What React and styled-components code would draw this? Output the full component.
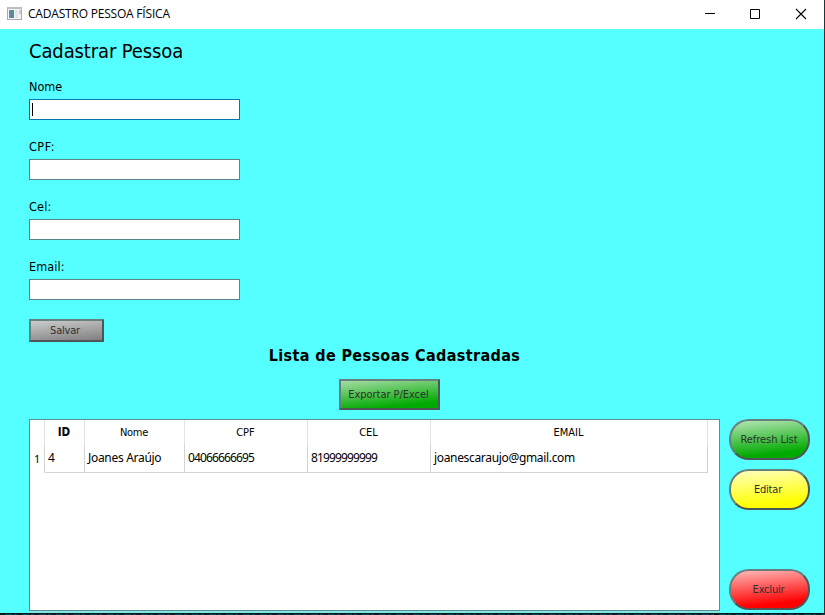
import React from "react";
import styled, { createGlobalStyle, css } from "styled-components";

const GlobalStyle = createGlobalStyle`
  * { box-sizing: border-box; }
  body { margin: 0; overflow: hidden; }
`;

const ui = css`
  font-family: "DejaVu Sans Condensed", "DejaVu Sans", sans-serif;
  font-stretch: condensed;
`;

const Window = styled.div`
  width: 825px;
  height: 615px;
  display: flex;
  flex-direction: column;
  background: #55ffff;
  border-right: 1px solid #17393d;
  color: #000;
  ${ui}
`;

const TitleBar = styled.header`
  height: 29px;
  flex: none;
  display: flex;
  align-items: center;
  background: #fff;
  padding: 0 17px 2px 7px;
`;

const Title = styled.h1`
  margin: 0 auto 0 6px;
  font: 400 12px/16px "Open Sans", "Noto Sans", sans-serif;
  letter-spacing: ${(p) => p.$spacing}px;
  white-space: nowrap;
`;

const Controls = styled.div`
  display: flex;
  gap: 34px;
`;

const Content = styled.main`
  height: 584px;
  flex: none;
  padding: 10px 14px 0 29px;
`;

const Heading = styled.h2`
  margin: 0;
  height: 25px;
  font-size: 20px;
  line-height: 24px;
  font-weight: 400;
  letter-spacing: ${(p) => p.$spacing}px;
`;

const Form = styled.form`
  display: flex;
  flex-direction: column;
  align-items: flex-start;
  padding-top: 15px;
`;

const Field = styled.label`
  height: 60px;
  display: flex;
  flex-direction: column;
`;

const Caption = styled.span`
  height: 20px;
  font-size: 12.5px;
  line-height: 16px;
  letter-spacing: ${(p) => p.$spacing}px;
`;

const Input = styled.span`
  width: 211px;
  height: 21px;
  padding: 3px 2px;
  background: #fff;
  border: 1px solid ${(p) => (p.$focused ? "#0078a8" : "#5b8585")};
`;

const Caret = styled.i`
  display: block;
  width: 1px;
  height: 13px;
  background: #000;
`;

const Button = styled.button`
  ${ui}
  width: ${(p) => p.$w}px;
  height: ${(p) => p.$h}px;
  padding: 1px 0 0;
  font-size: 11px;
  line-height: 14px;
  letter-spacing: ${(p) => p.$spacing}px;
  text-indent: ${(p) => p.$shift || 0}px;
  color: #302f2f;
  white-space: nowrap;
  border: 2px solid;
  border-color: #66807f #505657 #505657 #66807f;
  border-radius: ${(p) => p.$radius || 0}px;
  background: linear-gradient(174deg, ${(p) => p.$from} 0%, ${(p) => p.$to} ${(p) => p.$stop || 80}%);
  background-origin: border-box;
`;

const ListHeader = styled.section`
  width: 731px;
  height: 77px;
  display: flex;
  flex-direction: column;
  align-items: center;
`;

const ListTitle = styled.h3`
  margin: 0;
  height: 37px;
  font-size: 16px;
  line-height: 27px;
  font-weight: 700;
  letter-spacing: ${(p) => p.$spacing}px;
  white-space: nowrap;
`;

const ExportSlot = styled.div`
  padding-right: 10px;
`;

const ListArea = styled.section`
  display: flex;
  gap: 9px;
`;

const TableFrame = styled.div`
  width: 691px;
  height: 192px;
  background: #fff;
  border: 1px solid #5b8f8f;
  box-shadow: 0 2px 0 #83e5e3;
`;

const Grid = styled.div`
  display: grid;
  grid-template-columns: 15px 40px 100px 123px 123px 277px;
  grid-template-rows: 25px 28px;
  width: 678px;
`;

const HeadCell = styled.div`
  border-right: 1px solid #e3e3e3;
  padding-right: 1px;
  text-align: center;
  font-size: ${(p) => (p.$bold ? 11.5 : 11)}px;
  line-height: 25px;
  font-weight: ${(p) => (p.$bold ? 700 : 400)};
  letter-spacing: ${(p) => p.$spacing}px;
`;

const Cell = styled.div`
  border-right: 1px solid #d4d4d4;
  border-bottom: 1px solid ${(p) => (p.$index ? "transparent" : "#d4d4d4")};
  padding-left: ${(p) => (p.$index ? 4 : 3)}px;
  font: 400 12px/${(p) => (p.$index ? 28 : 26)}px "Noto Sans", sans-serif;
  font-size: ${(p) => (p.$index ? 11 : 12)}px;
  letter-spacing: ${(p) => p.$spacing}px;
  white-space: nowrap;
`;

const Actions = styled.div`
  display: grid;
  align-content: start;
  grid-template-rows: 50px 100px 41px;
`;

const Slot = styled.div`
  display: flex;
  align-items: ${(p) => (p.$end ? "flex-end" : "flex-start")};
`;

const BottomEdge = styled.footer`
  height: 2px;
  flex: none;
  margin-right: -1px;
  background: repeating-linear-gradient(90deg, #06191e 0 5px, #0b4856 5px 12px, #06191e 12px 14px, #0b4856 14px 17px);
  border-top: 1px solid #06191e;
`;

const fields = [
  { caption: "Nome", spacing: 0, focused: true },
  { caption: "CPF:", spacing: 0.5 },
  { caption: "Cel:", spacing: 0.2 },
  { caption: "Email:", spacing: 0.1 },
];

const columns = [
  { name: "ID", spacing: 0, bold: true },
  { name: "Nome", spacing: -0.3 },
  { name: "CPF", spacing: 0 },
  { name: "CEL", spacing: -0.1 },
  { name: "EMAIL", spacing: 0 },
];

const row = [
  { value: "4", spacing: 0 },
  { value: "Joanes Araújo", spacing: -0.3 },
  { value: "04066666695", spacing: -0.86 },
  { value: "81999999999", spacing: -0.86 },
  { value: "joanescaraujo@gmail.com", spacing: -0.33 },
];

function AppIcon() {
  return (
    <svg width="15" height="13" viewBox="0 0 15 13">
      <rect x="0.5" y="0.5" width="14" height="12" fill="#f4f4f4" stroke="#a5acb0" />
      <path d="M0 1h15" stroke="#b9bfc3" strokeWidth="2" />
      <rect x="2" y="3" width="5" height="8" fill="#528f91" />
      <rect x="2" y="3" width="2" height="8" fill="#6b8aa3" />
      <rect x="8" y="3" width="3" height="8" fill="#e5e5e5" />
      <rect x="12" y="3" width="2" height="4" fill="#c7ccce" />
    </svg>
  );
}

function WindowControls() {
  return (
    <Controls>
      <svg width="12" height="12" viewBox="0 0 12 12"><path d="M2 5.5h10" stroke="#000" /></svg>
      <svg width="12" height="12" viewBox="0 0 12 12"><path d="M1.5 1.5h9v9h-9z" fill="none" stroke="#000" /></svg>
      <svg width="12" height="12" viewBox="0 0 12 12"><path d="M1 1l10 10M11 1L1 11" stroke="#000" strokeWidth="1.1" /></svg>
    </Controls>
  );
}

export default function App() {
  return (
    <Window>
      <GlobalStyle />
      <TitleBar>
        <AppIcon />
        <Title $spacing={-0.2}>CADASTRO PESSOA FÍSICA</Title>
        <WindowControls />
      </TitleBar>
      <Content>
        <Heading $spacing={-0.12}>Cadastrar Pessoa</Heading>
        <Form>
          {fields.map((f) => (
            <Field key={f.caption}>
              <Caption $spacing={f.spacing}>{f.caption}</Caption>
              <Input $focused={f.focused}>{f.focused && <Caret />}</Input>
            </Field>
          ))}
          <Button type="button" $w={75} $h={23} $from="#d2d2d2" $to="#828282" $stop={90} $spacing={-0.2} $shift={-3}>Salvar</Button>
        </Form>
        <ListHeader>
          <ListTitle $spacing={0.37}>Lista de Pessoas Cadastradas</ListTitle>
          <ExportSlot>
            <Button $w={101} $h={31} $from="#b0e0b0" $to="#00aa00" $spacing={-0.05} $shift={-2}>Exportar P/Excel</Button>
          </ExportSlot>
        </ListHeader>
        <ListArea>
          <TableFrame>
            <Grid>
              <HeadCell />
              {columns.map((c) => (
                <HeadCell key={c.name} $bold={c.bold} $spacing={c.spacing}>{c.name}</HeadCell>
              ))}
              <Cell $index>1</Cell>
              {row.map((c) => (
                <Cell key={c.value} $spacing={c.spacing}>{c.value}</Cell>
              ))}
            </Grid>
          </TableFrame>
          <Actions>
            <Slot><Button $w={81} $h={41} $radius={20} $from="#bfe8bf" $to="#00aa00" $spacing={-0.05} $shift={-1}>Refresh List</Button></Slot>
            <Slot><Button $w={81} $h={41} $radius={20} $from="#ffffc8" $to="#ffff00" $spacing={-0.2} $shift={-3}>Editar</Button></Slot>
            <Slot $end><Button $w={81} $h={41} $radius={20} $from="#ffc4c4" $to="#ff0000" $spacing={-0.2} $shift={-2}>Excluir</Button></Slot>
          </Actions>
        </ListArea>
      </Content>
      <BottomEdge />
    </Window>
  );
}
